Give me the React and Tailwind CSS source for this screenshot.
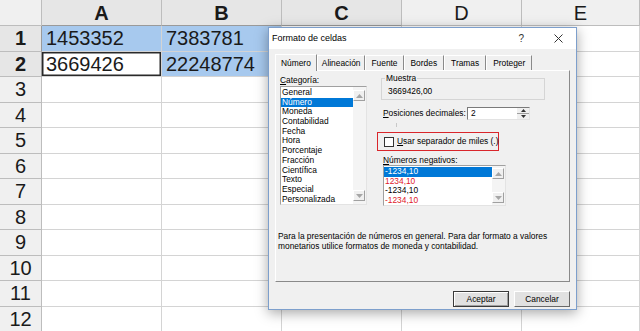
import React from "react";

const cols = ["A", "B", "C", "D", "E"];
const rows = [1, 2, 3, 4, 5, 6, 7, 8, 9, 10, 11, 12];
const data = { A1: "1453352", B1: "7383781", A2: "3669426", B2: "22248774" };
const tinted = ["A1", "B1", "B2"];
const boldCols = ["A", "B", "C"];

const categories = [
  "General",
  "Número",
  "Moneda",
  "Contabilidad",
  "Fecha",
  "Hora",
  "Porcentaje",
  "Fracción",
  "Científica",
  "Texto",
  "Especial",
  "Personalizada",
];

const negatives = [
  { t: "-1234,10", c: "sel" },
  { t: "1234,10", c: "red" },
  { t: "-1234,10", c: "black" },
  { t: "-1234,10", c: "red" },
];

const Tri = ({ up }) => (
  <svg width="7" height="4" viewBox="0 0 7 4">
    <path d={up ? "M0 4L3.5 0L7 4Z" : "M0 0L3.5 4L7 0Z"} fill="#a6a6a6" />
  </svg>
);

const ScrollBtn = ({ up }) => (
  <div className="h-[11px] w-full flex items-center justify-center bg-[#f0f0f0] border-t border-l border-white border-r border-b border-r-[#a0a0a0] border-b-[#a0a0a0]">
    <Tri up={up} />
  </div>
);

function Sheet() {
  return (
    <div className="w-[640px] h-[331px] overflow-hidden bg-white font-['Liberation_Sans',Arial,sans-serif] text-[#1a1a1a]">
      <div className="grid grid-cols-[42px_120px_120px_120px_120px_118px] h-[26px]">
        <div className="bg-[#f0f0f0] border-r border-b border-[#bdbdbd]" />
        {cols.map((c) => (
          <div
            key={c}
            className={`flex items-center justify-center text-[20px] leading-none border-r ${
              boldCols.includes(c)
                ? "font-bold bg-[#e6e6e6] border-b border-b-[#9a9a9a] border-r-[#bdbdbd]"
                : "bg-[#f0f0f0] border-b border-[#bdbdbd]"
            }`}
          >
            {c}
          </div>
        ))}
      </div>
      {rows.map((r) => (
        <div key={r} className="grid grid-cols-[42px_120px_120px_120px_120px_118px] h-[25.5px]">
          <div
            className={`flex items-center justify-center text-[20px] leading-none border-b border-r ${
              r <= 2
                ? "font-bold bg-[#e6e6e6] border-b-[#bdbdbd] border-r-[#9a9a9a]"
                : "bg-[#f0f0f0] border-[#bdbdbd]"
            }`}
          >
            {r}
          </div>
          {cols.map((c) => {
            const id = c + r;
            const active = id === "A2";
            return (
              <div
                key={id}
                className={`flex items-center pl-[4px] text-[20px] leading-none border-r border-b border-[#d4d4d4] ${
                  tinted.includes(id) ? "bg-[#a7c9ee] border-[#9ec0e4]" : ""
                } ${active ? "shadow-[inset_0_0_0_1.5px_#2a2a2a]" : ""}`}
              >
                {data[id] || ""}
              </div>
            );
          })}
        </div>
      ))}
    </div>
  );
}

function Dialog() {
  const tabs = [
    { t: "Número", w: "px-[5px]" },
    { t: "Alineación", w: "px-[4px]" },
    { t: "Fuente", w: "px-[5px]" },
    { t: "Bordes", w: "px-[6px]" },
    { t: "Tramas", w: "px-[6px]" },
    { t: "Proteger", w: "px-[6px]" },
  ];
  return (
    <div className="absolute left-[268px] top-[27px] w-[309px] h-[283px] bg-[#f0f0f0] border border-[#7d9fcc] shadow-[0_3px_12px_rgba(0,0,0,0.35)] font-['Liberation_Sans',Arial,sans-serif] text-[8.4px] text-black">
      {/* title bar */}
      <div className="h-[21px] bg-white flex items-center pl-[3px] pr-[13px] text-[9px]">
        <span className="flex-1">Formato de celdas</span>
        <span className="mr-[30px] text-[10px] text-[#333]">?</span>
        <svg width="9" height="9" viewBox="0 0 9 9">
          <path d="M0.5 0.5L8.5 8.5M8.5 0.5L0.5 8.5" stroke="#333" strokeWidth="1" />
        </svg>
      </div>

      <div className="pl-[6px] pt-[4px]">
        {/* tabs */}
        <div className="flex items-end h-[17px]">
          {tabs.map((tab, i) => (
            <div
              key={tab.t}
              className={`flex items-center border-t border-l border-t-white border-l-white border-r border-r-[#8a8a8a] ${tab.w} ${
                i === 0 ? "h-[17px] -mb-px relative bg-[#f0f0f0]" : "h-[15px]"
              }`}
            >
              {tab.t}
            </div>
          ))}
        </div>

        {/* panel */}
        <div className="w-[295px] h-[212px] border-t border-l border-white border-r border-b border-r-[#8a8a8a] border-b-[#8a8a8a] px-[1px] pt-[4px]">
          <div className="flex">
            {/* left col */}
            <div className="w-[87px] ml-[3px]">
              <div className="h-[11px] leading-[11px]">
                <span className="underline">C</span>ategoría:
              </div>
              <div className="h-[119px] flex bg-white border border-t-[#a0a0a0] border-l-[#a0a0a0] border-r-[#e3e3e3] border-b-[#e3e3e3]">
                <div className="flex-1 pt-px">
                  {categories.map((c, i) => (
                    <div
                      key={c}
                      className={`h-[9.7px] leading-[9.7px] pl-px ${i === 1 ? "bg-[#0078d7] text-white" : ""}`}
                    >
                      {c}
                    </div>
                  ))}
                </div>
                <div className="w-[13px] flex flex-col justify-between bg-[#f4f4f4] py-[3px] pr-px">
                  <ScrollBtn up />
                  <ScrollBtn />
                </div>
              </div>
            </div>

            {/* right col */}
            <div className="ml-[14px] w-[170px] flex flex-col">
              <div className="relative w-[164px] h-[22px] mt-[3px] border border-[#d5d5d5] pl-[6px] pt-[7px]">
                <span className="absolute left-[3px] -top-[6px] bg-[#f0f0f0] px-px leading-[10px]">Muestra</span>
                <div className="leading-[10px]">3669426,00</div>
              </div>

              <div className="flex items-center h-[13px] mt-[7px] ml-[2px]">
                <span className="w-[84px]">
                  <span className="underline">P</span>osiciones decimales:
                </span>
                <div className="w-[63px] h-[13px] bg-white flex border border-t-[#7a7a7a] border-l-[#7a7a7a] border-r-[#e3e3e3] border-b-[#e3e3e3]">
                  <span className="flex-1 pl-[3px] leading-[11px]">2</span>
                  <div className="w-[12px] flex flex-col">
                    <div className="flex-1 flex items-center justify-center bg-[#f0f0f0] border-b border-[#a0a0a0]">
                      <svg width="5" height="3" viewBox="0 0 5 3"><path d="M0 3L2.5 0L5 3Z" fill="#333" /></svg>
                    </div>
                    <div className="flex-1 flex items-center justify-center bg-[#f0f0f0]">
                      <svg width="5" height="3" viewBox="0 0 5 3"><path d="M0 0L2.5 3L5 0Z" fill="#333" /></svg>
                    </div>
                  </div>
                </div>
              </div>

              <div className="w-px h-[4px] bg-[#c8c8c8] ml-[15px] mt-[3px]" />

              <div className="w-[122px] h-[19px] -ml-[4px] mt-[5px] border-[1.5px] border-[#d9262b] flex items-center pl-[6px] gap-[3px] whitespace-nowrap">
                <div className="w-[10px] h-[10px] shrink-0 bg-white border border-[#333]" />
                <span>
                  <span className="underline">U</span>sar separador de miles (.)
                </span>
              </div>

              <div className="h-[10px] leading-[10px] mt-[4px] ml-[2px]">
                <span className="underline">N</span>úmeros negativos:
              </div>
              <div className="w-[123px] h-[41px] ml-[2px] flex bg-white border border-t-[#a0a0a0] border-l-[#a0a0a0] border-r-[#e3e3e3] border-b-[#e3e3e3]">
                <div className="flex-1 pt-px">
                  {negatives.map((n, i) => (
                    <div
                      key={i}
                      className={`h-[9.7px] leading-[9.7px] pl-px ${
                        n.c === "sel" ? "bg-[#0078d7] text-white" : n.c === "red" ? "text-[#e0202a]" : ""
                      }`}
                    >
                      {n.t}
                    </div>
                  ))}
                </div>
                <div className="w-[13px] flex flex-col justify-between bg-[#f4f4f4] py-[2px] pr-px">
                  <ScrollBtn up />
                  <ScrollBtn />
                </div>
              </div>
            </div>
          </div>

          <p className="mt-[25px] leading-[10px] pl-px">
            Para la presentación de números en general. Para dar formato a valores
            <br />
            monetarios utilice formatos de moneda y contabilidad.
          </p>
        </div>

        {/* buttons */}
        <div className="flex justify-end gap-[5px] w-[295px] mt-[9px]">
          <button className="w-[56px] h-[16px] bg-[#e1e1e1] border border-[#3a3a3a] shadow-[inset_1px_1px_0_#fff,inset_-1px_-1px_0_#a0a0a0]">
            Aceptar
          </button>
          <button className="w-[56px] h-[16px] bg-[#e1e1e1] border border-t-white border-l-white border-r-[#696969] border-b-[#696969]">
            Cancelar
          </button>
        </div>
      </div>
    </div>
  );
}

export default function App() {
  return (
    <div className="relative w-[640px] h-[331px] overflow-hidden">
      <Sheet />
      <Dialog />
    </div>
  );
}
